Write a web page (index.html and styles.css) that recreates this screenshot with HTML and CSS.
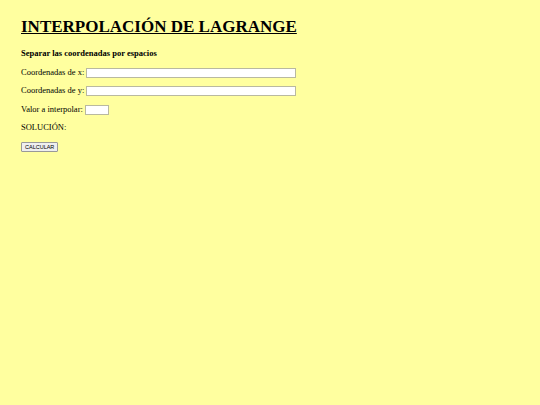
FILE: index.html
```html
<!DOCTYPE html>
<html lang="es">
<head>
<meta charset="utf-8">
<title>Interpolación de Lagrange</title>
<link rel="stylesheet" href="styles.css">
</head>
<body>
<main class="page">
  <h1 class="title">INTERPOLACIÓN DE LAGRANGE</h1>
  <p class="hint">Separar las coordenadas por espacios</p>
  <p class="row"><label>Coordenadas de x: <input class="field wide" type="text"></label></p>
  <p class="row"><label>Coordenadas de y: <input class="field wide" type="text"></label></p>
  <p class="row"><label>Valor a interpolar: <input class="field narrow" type="text"></label></p>
  <p class="row">SOLUCIÓN:</p>
  <p class="row"><button class="btn" type="button">CALCULAR</button></p>
</main>
</body>
</html>
```
FILE: styles.css
```css
html, body {
  margin: 0;
  padding: 0;
  background: #ffff9f;
}
body {
  font-family: "Liberation Serif", "Times New Roman", serif;
  color: #000;
  font-size: 8.5px;
}
.page {
  padding: 15px 21px;
}
.title {
  font-size: 17px;
  font-weight: bold;
  text-decoration: underline;
  margin: 0 0 5px 0;
  line-height: 24px;
}
.hint {
  font-weight: bold;
  margin: 0;
  line-height: 18.5px;
}
.row {
  margin: 0;
  line-height: 18.5px;
}
.field {
  box-sizing: border-box;
  height: 10px;
  border: 1px solid #b9b9a0;
  background: #fff;
  vertical-align: middle;
  padding: 0;
  margin: 0;
}
.wide { width: 210px; }
.narrow { width: 24px; }
.btn {
  font-family: "Liberation Sans", Arial, sans-serif;
  font-size: 5.5px;
  padding: 1px 3px;
  border: 1px solid #999;
  background: #efefef;
  border-radius: 1px;
  line-height: 6px;
}
```
